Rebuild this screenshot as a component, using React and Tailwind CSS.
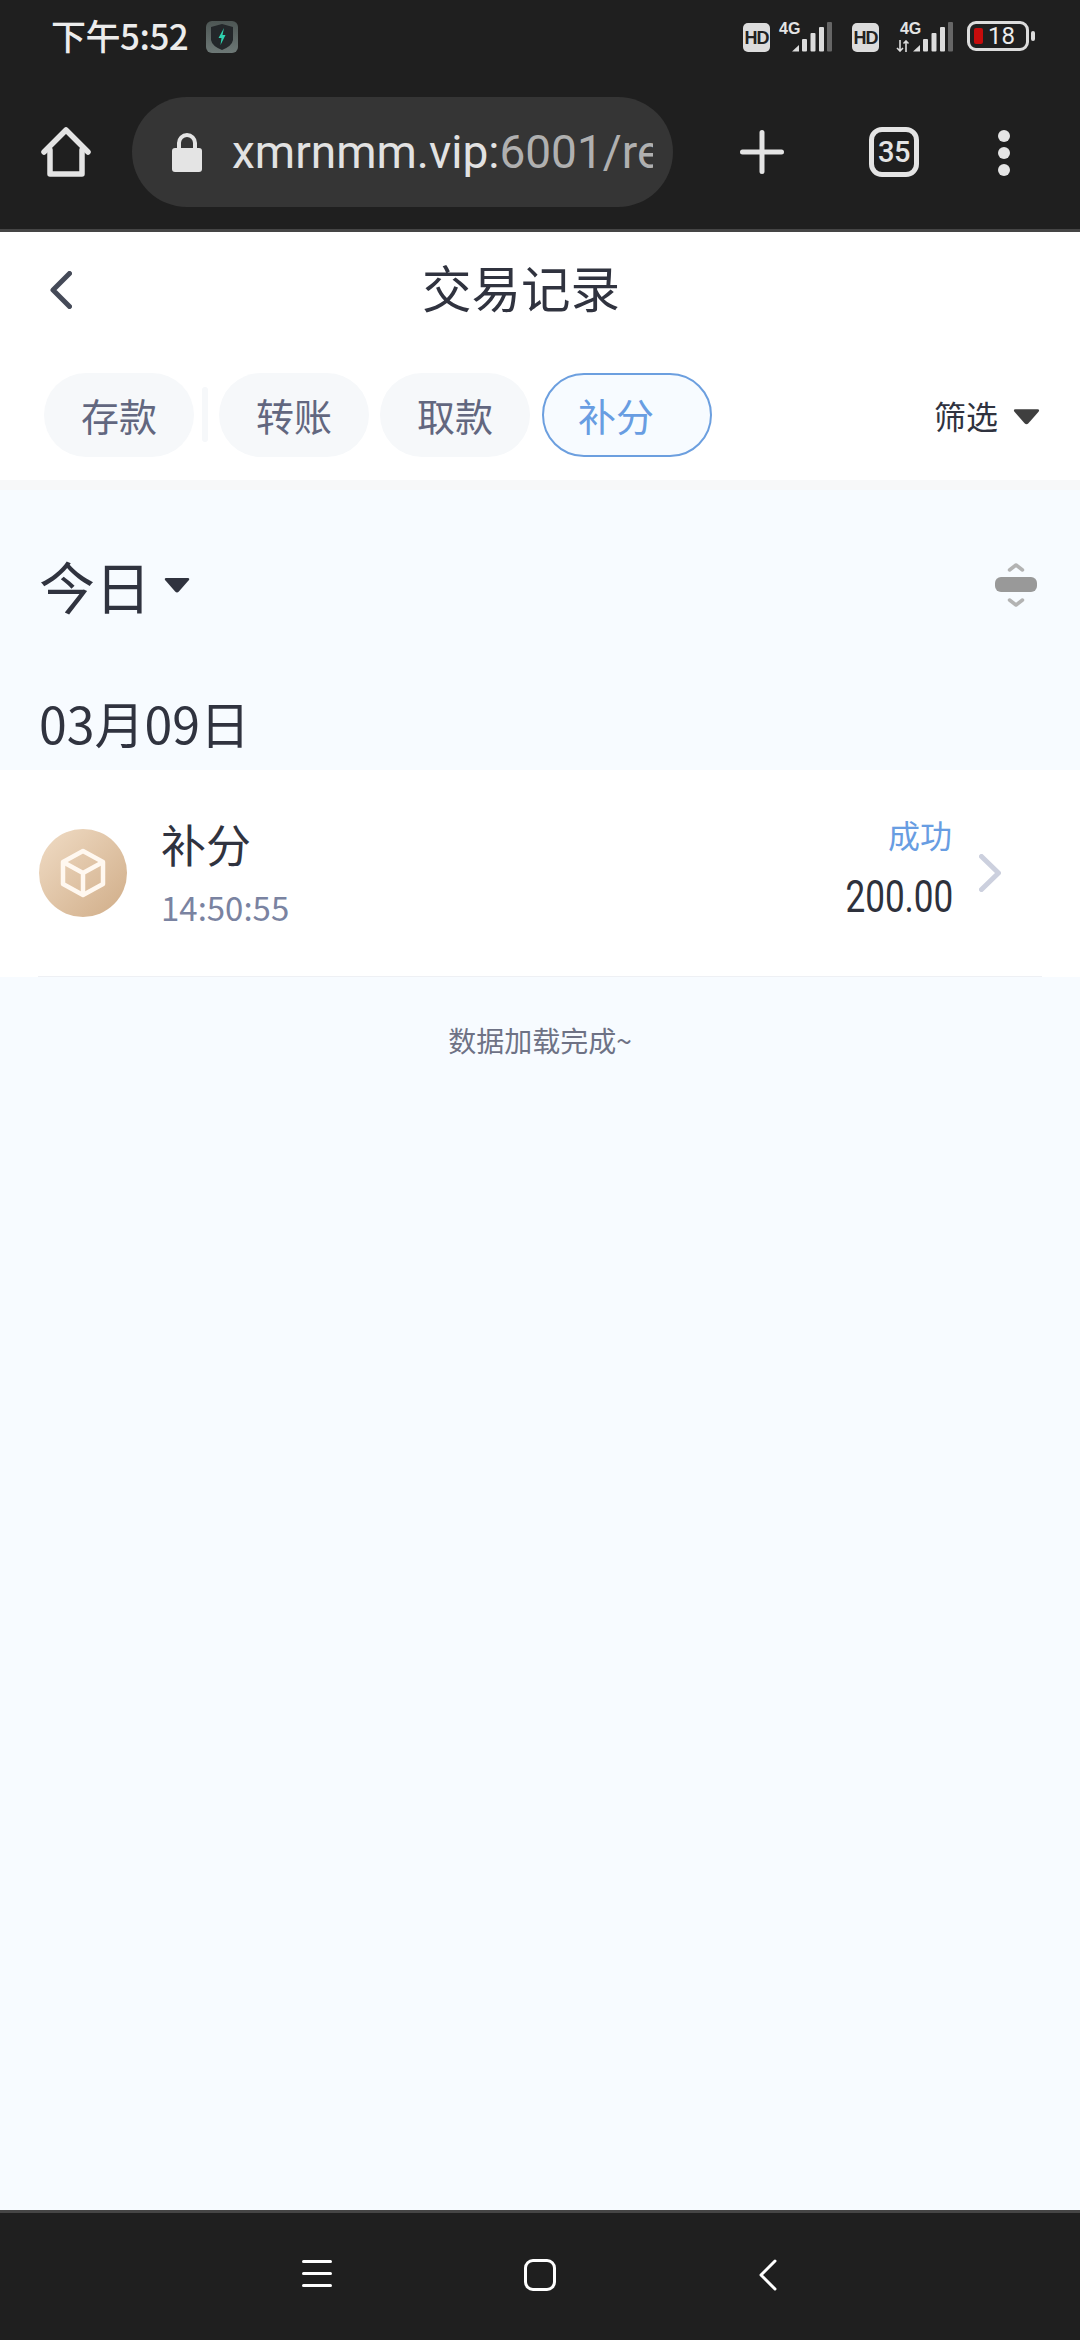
import React from 'react';

const CJK = "font-['Noto_Sans_CJK_SC','Noto_Sans',sans-serif]";

const Signal = ({ className }) => (
  <svg className={className} width="40" height="30" viewBox="0 0 40 30" fill="#dcdcdc">
    <path d="M0 29.5 L7 23 V29.5 Z" />
    <rect x="10" y="17" width="5" height="12.5" rx="1" />
    <rect x="18.5" y="11" width="5" height="18.5" rx="1" />
    <rect x="27" y="5" width="5" height="24.5" rx="1" />
    <rect x="35" y="0" width="5" height="29.5" rx="1" fill="#666666" />
  </svg>
);

const Hd = ({ className = '' }) => (
  <div className={`flex h-[29px] w-[28px] items-center justify-center rounded-[5px] bg-[#dcdcdc] ${className}`}>
    <span className="font-['Liberation_Sans',sans-serif] text-[18px] font-bold leading-none tracking-[-1px] text-[#222222]">HD</span>
  </div>
);

const FourG = ({ className = '' }) => (
  <span className={`font-['Liberation_Sans',sans-serif] text-[16px] font-bold leading-none text-[#e4e4e4] ${className}`}>4G</span>
);

const Caret = ({ className, fill }) => (
  <svg className={className} viewBox="0 0 28 16" fill={fill}>
    <path d="M2.5 0 H25.5 Q28 0 26.5 2.5 L16 14.5 Q14 16.5 12 14.5 L1.5 2.5 Q0 0 2.5 0 Z" />
  </svg>
);

const StatusBar = () => (
  <div className="flex h-[97px] items-start">
    <div className={`ml-[51px] mt-[15px] text-[35px] font-medium leading-[40px] tracking-[-0.5px] text-[#ececec] ${CJK}`}>下午5:52</div>
    <svg className="ml-[18px] mt-[21px]" width="32" height="32" viewBox="0 0 32 32">
      <defs>
        <linearGradient id="shieldBg" x1="0" y1="0" x2="0" y2="1">
          <stop offset="0" stopColor="#4d5654" />
          <stop offset="1" stopColor="#6d7876" />
        </linearGradient>
      </defs>
      <rect width="32" height="32" rx="6" fill="url(#shieldBg)" />
      <path d="M5 6 L16 3 L27 6 V19 Q26 25 16 29 Q6 25 5 19 Z" fill="#23272a" />
      <path d="M18 7 L12.5 17 H15.5 L14.5 24 L19.5 14 H16.5 Z" fill="#2fd3b0" />
    </svg>
    <div className="ml-auto mr-[45px] mt-[21px] flex h-[32px] w-[292px] items-start">
      <Hd className="mt-[2px]" />
      <div className="relative ml-[9px] h-[32px] w-[62px]">
        <FourG className="absolute left-0 top-0" />
        <Signal className="absolute left-[13px] top-[1px]" />
      </div>
      <Hd className="ml-[13px] mt-[2px]" />
      <div className="relative ml-[17px] h-[32px] w-[57px]">
        <FourG className="absolute left-[4px] top-0" />
        <svg className="absolute left-0 top-[19px]" width="14" height="12" viewBox="0 0 14 12" fill="none" stroke="#dcdcdc" strokeWidth="1.6">
          <path d="M4 0 V11 M1 8 L4 11 L7 8" />
          <path d="M10 12 V1 M7.5 3.5 L10 1 L12.5 3.5" />
        </svg>
        <Signal className="absolute left-[17px] top-[1px]" />
      </div>
      <div className="ml-[16px] flex h-[30px] w-[64px] items-center rounded-[9px] border-[3px] border-[#dcdcdc] pl-[4px]">
        <div className="h-[16px] w-[9px] rounded-[2px] bg-[#c60c0c]" />
        <span className="ml-[5px] font-['Roboto',sans-serif] text-[24px] leading-none text-[#ececec]">18</span>
      </div>
      <div className="ml-[2px] mt-[10px] h-[10px] w-[4px] rounded-full bg-[#dcdcdc]" />
    </div>
  </div>
);

const Toolbar = () => (
  <div className="flex h-[135px] items-start border-b-[3px] border-[#454545]">
    <svg className="ml-[41px] mt-[30px]" width="50" height="50" viewBox="0 0 50 50" fill="none" stroke="#e4e4e4" strokeWidth="5.5" strokeLinecap="round" strokeLinejoin="round">
      <path d="M3 25 L25 3 L47 25" />
      <path d="M9 23 V47 H41 V23" />
    </svg>
    <div className="ml-[41px] flex h-[110px] w-[541px] items-center overflow-hidden rounded-full bg-[#353535]">
      <svg className="ml-[40px] shrink-0" width="30" height="39" viewBox="0 0 30 39">
        <path d="M7 17 V10 A8 8 0 0 1 23 10 V17" fill="none" stroke="#e4e4e4" strokeWidth="4" />
        <rect y="15" width="30" height="24" rx="3" fill="#e4e4e4" />
      </svg>
      <div className="ml-[30px] w-[421px] overflow-hidden whitespace-nowrap font-['Roboto',sans-serif] text-[46px] leading-[56px] text-[#e2e2e2]">
        xmrnmm.vip:<span className="text-[#b0b0b0]">6001/re</span>
      </div>
    </div>
    <svg className="ml-[67px] mt-[33px]" width="44" height="44" viewBox="0 0 44 44" stroke="#e4e4e4" strokeWidth="5" strokeLinecap="round">
      <path d="M2.5 22 H41.5 M22 2.5 V41.5" />
    </svg>
    <div className="ml-[85px] mt-[30px] flex h-[50px] w-[50px] items-center justify-center rounded-[13px] border-[5px] border-[#e4e4e4]">
      <span className="font-['Roboto',sans-serif] text-[29px] font-medium leading-none tracking-[-0.5px] text-[#e4e4e4]">35</span>
    </div>
    <div className="ml-[79px] mt-[33px] flex flex-col gap-[5px]">
      <div className="h-[12px] w-[12px] rounded-full bg-[#e4e4e4]" />
      <div className="h-[12px] w-[12px] rounded-full bg-[#e4e4e4]" />
      <div className="h-[12px] w-[12px] rounded-full bg-[#e4e4e4]" />
    </div>
  </div>
);

const Tab = ({ label, active, className = '' }) => (
  <div
    className={`flex h-[84px] items-center rounded-full text-[38px] leading-none ${
      active
        ? 'w-[170px] border-2 border-[#6c9fdf] bg-[#f7fbff] pl-[34px] text-[#689de2]'
        : 'w-[150px] justify-center bg-[#f6f8fa] text-[#62677f]'
    } ${className}`}
  >
    {label}
  </div>
);

const Header = () => (
  <div className={`bg-white ${CJK}`}>
    <div className="flex h-[122px] items-center pl-[50px]">
      <svg className="mt-[-6px]" width="22" height="38" viewBox="0 0 22 38" fill="none" stroke="#454a58" strokeWidth="5" strokeLinecap="round" strokeLinejoin="round">
        <path d="M19.5 2.5 L3 19 L19.5 35.5" />
      </svg>
      <h1 className="ml-[350px] mt-[-12px] text-[49.5px] font-normal leading-none text-[#30333f]">交易记录</h1>
    </div>
    <div className="flex h-[126px] items-start pl-[44px] pt-[19px]">
      <Tab label="存款" />
      <div className="ml-[8px] mt-[14px] h-[55px] w-[6px] rounded-full bg-[#f6f8fa]" />
      <Tab label="转账" className="ml-[11px]" />
      <Tab label="取款" className="ml-[11px]" />
      <Tab label="补分" active className="ml-[12px]" />
      <div className="ml-[222px] flex h-[84px] items-center">
        <span className="text-[32px] leading-none text-[#30333f]">筛选</span>
        <Caret className="ml-[15px] mt-[3px] h-[16px] w-[27px]" fill="#3f3f3f" />
      </div>
    </div>
  </div>
);

const SortIcon = () => (
  <svg width="42" height="46" viewBox="0 0 42 46" fill="none">
    <path d="M14.5 8 L21 3 L27.5 8" stroke="#b3b3b3" strokeWidth="3.5" strokeLinecap="round" strokeLinejoin="round" />
    <rect y="15" width="42" height="15" rx="6" fill="#999999" />
    <path d="M14.5 38 L21 43 L27.5 38" stroke="#b3b3b3" strokeWidth="3.5" strokeLinecap="round" strokeLinejoin="round" />
  </svg>
);

const RecordRow = () => (
  <div className="bg-white">
    <div className="flex h-[206px] items-center pl-[39px]">
      <div className="flex h-[88px] w-[88px] shrink-0 items-center justify-center rounded-full bg-gradient-to-br from-[#f0dcc5] to-[#d0ad88]">
        <svg width="46" height="50" viewBox="0 0 46 50" fill="none" stroke="#fff8f0" strokeWidth="4.5" strokeLinejoin="round">
          <path d="M23 3 L43 14 V36 L23 47 L3 36 V14 Z" />
          <path d="M3 14 L23 25 L43 14 M23 25 V47" />
        </svg>
      </div>
      <div className="ml-[34px] flex flex-col">
        <span className="mt-[-2px] text-[45px] leading-[56px] text-[#30333f]">补分</span>
        <span className="mt-[13px] text-[33px] leading-[44px] text-[#7a83a1]">14:50:55</span>
      </div>
      <div className="ml-auto flex flex-col items-end">
        <span className="mt-[-12px] text-[32px] leading-[44px] text-[#689de2]">成功</span>
        <span className="mt-[16px] mr-[-1px] origin-right scale-x-[0.78] font-['Roboto',sans-serif] text-[45px] font-normal leading-[50px] text-[#2e313c]">200.00</span>
      </div>
      <svg className="ml-[27px] mr-[79px]" width="22" height="38" viewBox="0 0 22 38" fill="none" stroke="#ccd0de" strokeWidth="5" strokeLinecap="round" strokeLinejoin="round">
        <path d="M2.5 2.5 L19.5 19 L2.5 35.5" />
      </svg>
    </div>
    <div className="mx-[38px] h-[1px] bg-[#eef0f4]" />
  </div>
);

const NavBar = () => (
  <div className="flex h-[130px] items-start border-t-[3px] border-[#454545] bg-[#1f1f1f]">
    <div className="ml-[302px] mt-[47px] flex w-[30px] flex-col gap-[9px]">
      <div className="h-[3px] rounded-full bg-white" />
      <div className="h-[3px] rounded-full bg-white" />
      <div className="h-[3px] rounded-full bg-white" />
    </div>
    <div className="ml-[192px] mt-[46px] h-[32px] w-[32px] rounded-[9px] border-[3px] border-white" />
    <svg className="ml-[203px] mt-[46px]" width="18" height="32" viewBox="0 0 18 32" fill="none" stroke="#ffffff" strokeWidth="3" strokeLinecap="round" strokeLinejoin="round">
      <path d="M16 2 L2 16 L16 30" />
    </svg>
  </div>
);

export default function App() {
  return (
    <div className={`flex h-[2340px] w-[1080px] flex-col overflow-hidden bg-[#f7fbff] ${CJK}`}>
      <div className="bg-[#1f1f1f]">
        <StatusBar />
        <Toolbar />
      </div>
      <Header />
      <main className="flex flex-1 flex-col">
        <div className="h-[10px] bg-[#f7f8f9]" />
        <div className="flex h-[190px] items-center pl-[39px] pr-[43px]">
          <span className="text-[56px] leading-none text-[#30333f]">今日</span>
          <Caret className="ml-[12px] h-[15px] w-[28px]" fill="#30333f" />
          <div className="ml-auto">
            <SortIcon />
          </div>
        </div>
        <div className="flex h-[90px] items-start pl-[39px]">
          <span className="mt-[17px] text-[50px] leading-none text-[#30333f]">03月09日</span>
        </div>
        <RecordRow />
        <p className="mt-[43px] text-center text-[28px] leading-[40px] text-[#6e7285]">数据加载完成~</p>
      </main>
      <NavBar />
    </div>
  );
}
